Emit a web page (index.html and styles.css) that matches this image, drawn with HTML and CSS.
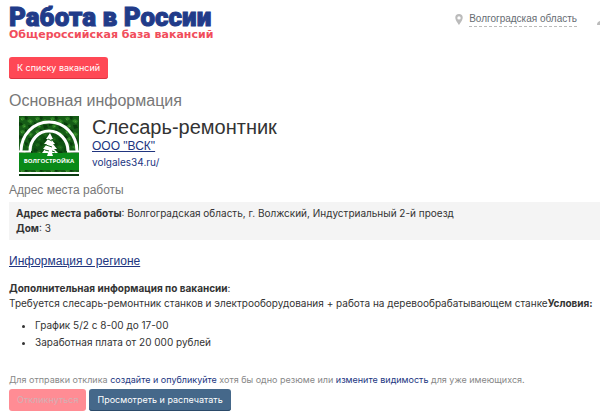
FILE: index.html
```
<!DOCTYPE html>
<html lang="ru">
<head>
    <meta charset="UTF-8">
    <meta name="viewport" content="width=device-width, initial-scale=1.0">
    <title>Слесарь-ремонтник</title>
    <link rel="stylesheet" href="styles.css">
</head>
<body>

<header class="header">
    <div class="brand">
        <div class="brand-name">Работа в России</div>
        <div class="brand-tagline">Общероссийская база вакансий</div>
    </div>
    <div class="region">
        <svg class="pin" viewBox="0 0 8 11" width="8" height="11" aria-hidden="true">
            <path fill-rule="evenodd" d="M4 0a3.7 3.7 0 0 0-3.7 3.8C.3 6.3 4 11 4 11s3.7-4.7 3.7-7.2A3.7 3.7 0 0 0 4 0zm0 2.2a1.7 1.7 0 1 1 0 3.4 1.7 1.7 0 0 1 0-3.4z"/>
        </svg>
        <a class="region-link" href="#">Волгоградская область</a>
        <svg class="user" viewBox="0 0 10 11" width="10" height="11" aria-hidden="true">
            <circle cx="6" cy="3" r="3"/>
            <path d="M0 11c0-3 2-4 4-4h4c2 0 2 2 2 4z"/>
        </svg>
    </div>
</header>

<main class="content">
    <a class="btn btn-red" href="#">К списку вакансий</a>

    <h2 class="section-title">Основная информация</h2>
    <div class="vacancy">
        <svg class="logo" viewBox="0 0 60 60" width="60" height="60" role="img" aria-label="Волгостройка">
            <defs>
                <pattern id="leaves" width="15" height="13" patternUnits="userSpaceOnUse">
                    <rect width="15" height="13" fill="#155c16"/>
                    <path fill="#2f8425" d="M1 2l3-1 2 2-3 2zM8 5l3-2 3 2-2 3zM3 9l3-1 1 3-3 1z"/>
                    <path fill="#093d0c" d="M6 0l3 1-1 3-2-1zM0 6l3 1 1 2-4 1zM9 9l4 0 1 3-4 1z"/>
                    <path fill="#4a9a35" d="M2 3h1v1h-1zM11 5h1v1h-1zM5 10h1v1h-1z"/>
                </pattern>
            </defs>
            <rect width="60" height="60" fill="url(#leaves)"/>
            <path d="M13 36C13 8 47 8 47 36z" fill="#0a4a10" opacity=".5"/>
            <rect y="37" width="60" height="17" fill="#0a8a18"/>
            <path d="M2 35A28 29 0 0 1 58 35M11 35A19 20 0 0 1 49 35" fill="none" stroke="#fff" stroke-width="3"/>
            <path d="M0 35.500h12M48 35.500h12" stroke="#fff" stroke-width="2"/>
            <path fill="#fff" d="M31 17l-4 6 2 0-4 5 3 0-4 5 2 0-3 4 6 0-1 3h6l-1-3h6l-4-4 3 0-4-5 2 0-4-5 2 0z"/>
            <path d="M29 23l4 2M27 29l6 2M26 34l4 1M33 35l3 1" stroke="#1b651d" stroke-width="1"/>
            <text class="logo-text" x="30" y="47" text-anchor="middle">ВОЛГОСТРОЙКА</text>
            <path d="M0 57h60" stroke="#fff" stroke-width="2"/>
            <path d="M0 59h60" stroke="#0a3a10" stroke-width="2"/>
        </svg>
        <div class="vacancy-info">
            <h1 class="vacancy-title">Слесарь-ремонтник</h1>
            <a class="company" href="#">ООО "ВСК"</a>
            <a class="site" href="#">volgales34.ru/</a>
        </div>
    </div>

    <h3 class="sub-title">Адрес места работы</h3>
    <div class="address">
        <div><b>Адрес места работы</b>: Волгоградская область, г. Волжский, Индустриальный 2-й проезд</div>
        <div><b>Дом</b>: 3</div>
    </div>

    <a class="region-info" href="#">Информация о регионе</a>

    <div class="description">
        <div><b>Дополнительная информация по вакансии</b>:</div>
        <div>Требуется слесарь-ремонтник станков и электрооборудования + работа на деревообрабатывающем станке<b>Условия:</b></div>
        <ul class="conditions">
            <li>График 5/2 с 8-00 до 17-00</li>
            <li>Заработная плата от 20 000 рублей</li>
        </ul>
    </div>

    <p class="note">Для отправки отклика <a href="#">создайте и опубликуйте</a> хотя бы одно резюме или <a href="#">измените видимость</a> для уже имеющихся.</p>
    <div class="actions">
        <button class="btn btn-red" type="button" disabled>Откликнуться</button>
        <button class="btn btn-blue" type="button">Просмотреть и распечатать</button>
    </div>
</main>

</body>
</html>
```
FILE: styles.css
```
* {
    box-sizing: border-box;
}
body {
    margin: 0;
    font-family: Inter, Arial, sans-serif;
    font-size: 10px;
    line-height: 16px;
    color: #333;
    background: #fff;
    overflow-x: hidden;
}
a {
    color: #21357f;
    text-decoration: none;
}
.header {
    display: flex;
    justify-content: space-between;
    padding: 4px 0 0 9px;
    overflow: hidden;
}
.brand {
    white-space: nowrap;
}
.brand-name {
    font-family: Roboto, Arial, sans-serif;
    font-size: 26px;
    font-weight: 900;
    line-height: 26px;
    color: #213b89;
    -webkit-text-stroke: 1px #213b89;
}
.brand-tagline {
    font-family: "DejaVu Sans", Verdana, sans-serif;
    font-size: 11px;
    font-weight: bold;
    line-height: 10px;
    color: #f14d5b;
}
.region {
    display: flex;
    align-items: center;
    height: 18px;
    margin: 6px -7px 0 0;
    white-space: nowrap;
}
.region svg {
    fill: #bbb;
}
.region-link {
    margin: 0 20px 0 6px;
    line-height: 14px;
    color: #666c72;
    border-bottom: 1px dashed #bbb;
}
.content {
    padding: 17px 0 0 9px;
}
.btn {
    display: inline-block;
    padding: 0 8px;
    border: 0;
    border-radius: 3px;
    font-family: inherit;
    font-size: 9px;
    line-height: 22px;
    color: #fff;
    cursor: pointer;
}
.btn-red {
    background: #ff4855;
    box-shadow: inset 0 -1px 0 #dc3342;
}
.btn-blue {
    background: #45688a;
    box-shadow: inset 0 -1px 0 #2b4a69;
}
.btn:disabled {
    background: #ff8c94;
    box-shadow: none;
    color: #d3b0b4;
    cursor: default;
}
.region-link,
.section-title,
.sub-title,
.vacancy-title,
.company,
.region-info {
    font-family: "Liberation Sans", Arial, sans-serif;
}
.section-title {
    margin: 13px 0 6px;
    font-size: 16px;
    font-weight: normal;
    line-height: 18px;
    color: #777;
}
.vacancy {
    display: flex;
    gap: 13px;
    padding-left: 10px;
}
.logo-text {
    font-family: "Open Sans", sans-serif;
    font-size: 6px;
    font-weight: bold;
    fill: #fff;
}
.vacancy-info {
    display: flex;
    flex-direction: column;
    align-items: flex-start;
}
.vacancy-title {
    margin: 0;
    font-size: 20px;
    font-weight: normal;
    line-height: 22px;
}
.company {
    font-size: 12px;
    text-decoration: underline;
}
.sub-title {
    margin: 6px 0 4px;
    font-size: 12px;
    font-weight: normal;
    line-height: 16px;
    color: #777;
}
.address {
    padding: 4px 7px;
    line-height: 15px;
    background: #f4f4f4;
}
.region-info {
    display: inline-block;
    margin: 13px 0 12px;
    font-size: 12px;
    text-decoration: underline;
}
.description {
    line-height: 15px;
}
.conditions {
    margin: 6px 0 0;
    padding-left: 26px;
    line-height: 17px;
}
.note {
    margin: 21px 0 1px;
    font-size: 9px;
    color: #888;
}
.actions {
    display: flex;
    gap: 3px;
}
```
